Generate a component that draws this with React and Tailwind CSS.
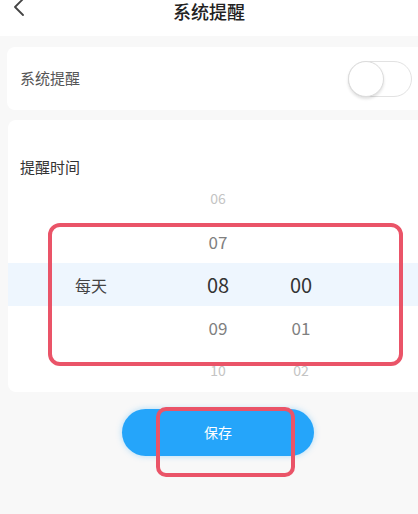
import React from 'react';

const font = { fontFamily: '"Noto Sans CJK SC", "Noto Sans", sans-serif' };

const rows = [
  { hour: '06', minute: '', tone: 'far' },
  { hour: '07', minute: '', tone: 'near' },
  { hour: '08', minute: '00', tone: 'active', label: '每天' },
  { hour: '09', minute: '01', tone: 'near' },
  { hour: '10', minute: '02', tone: 'far' },
];

const toneClass = {
  far: 'text-[14px] text-[#c4c4c4]',
  near: 'text-[17px] text-[#808080]',
  active: 'text-[20px] text-[#333333]',
};

const App = () => {
  return (
    <div className="relative w-[418px] h-[514px] overflow-hidden bg-[#f8f8f8]" style={font}>
      {/* Header */}
      <div className="relative h-[36px] bg-white pt-[1px]">
        <svg className="absolute left-[11px] top-[-2px]" width="16" height="18" viewBox="0 0 16 18" fill="none">
          <polyline points="12,1 4,9 12,17" stroke="#444" strokeWidth="1.8" strokeLinecap="round" strokeLinejoin="round" />
        </svg>
        <div className="text-center text-[18px] leading-[20px] text-[#222] font-medium">系统提醒</div>
      </div>

      {/* Switch card */}
      <div className="ml-[7px] mt-[11px] h-[63px] bg-white rounded-l-[8px] flex items-center justify-between pl-[13px] pr-[6px]">
        <span className="text-[15px] text-[#555]">系统提醒</span>
        <div className="relative w-[64px] h-[36px] rounded-full border border-[#e2e2e2] bg-white">
          <div className="absolute left-[-1px] top-[-1px] w-[36px] h-[36px] rounded-full bg-white border border-[#dcdcdc] shadow-[0_2px_3px_rgba(0,0,0,0.12)]" />
        </div>
      </div>

      {/* Time card */}
      <div className="ml-[8px] mt-[10px] h-[272px] bg-white rounded-l-[8px] overflow-hidden">
        <div className="pl-[12px] pt-[36px] h-[57px] text-[15px] leading-[22px] text-[#333]">提醒时间</div>
        <div className="flex flex-col">
          {rows.map((row) => (
            <div
              key={row.hour}
              className={`flex items-center h-[43px] ${row.tone === 'active' ? 'bg-[#eef6fe]' : ''}`}
            >
              <div className="w-[166px] text-center text-[16px] text-[#444]">{row.label || ''}</div>
              <div className={`w-[88px] text-center ${toneClass[row.tone]}`}>{row.hour}</div>
              <div className={`w-[78px] text-center ${toneClass[row.tone]}`}>{row.minute}</div>
            </div>
          ))}
        </div>
      </div>

      {/* Save button */}
      <div className="mt-[17px] ml-[122px] w-[192px] h-[47px] rounded-full bg-[#25a5fa] shadow-[0_0_6px_rgba(37,165,250,0.35)] flex items-center justify-center text-[14px] text-white">
        保存
      </div>

      {/* Annotation boxes */}
      <div className="absolute left-[48px] top-[223px] w-[355px] h-[143px] rounded-[12px] border-[4px] border-[#ea5468]" />
      <div className="absolute left-[156px] top-[407px] w-[139px] h-[70px] rounded-[10px] border-[4px] border-[#ea5468]" />
    </div>
  );
};

export default App;
